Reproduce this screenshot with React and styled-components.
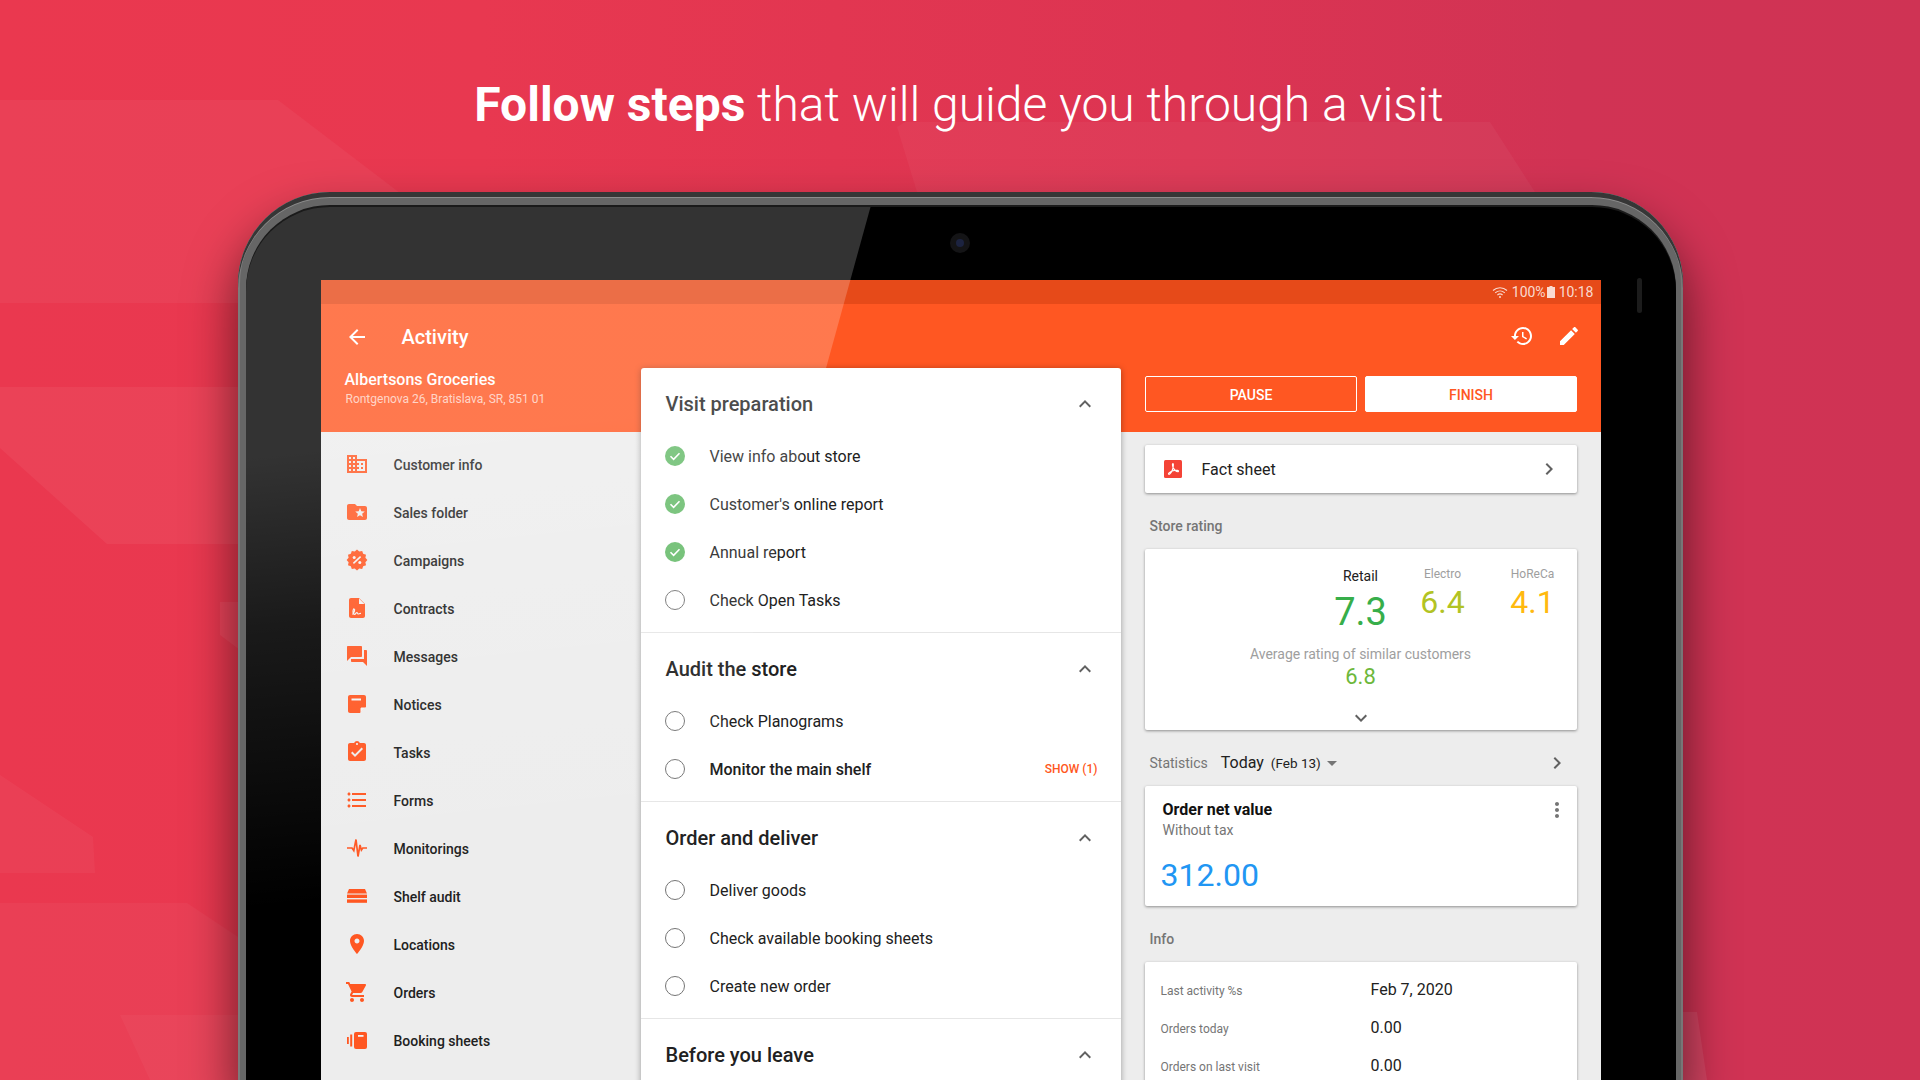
import React from "react";
import styled, { createGlobalStyle } from "styled-components";

const GlobalStyle = createGlobalStyle`
  html, body {
    margin: 0;
    padding: 0;
    width: 1920px;
    height: 1080px;
    overflow: hidden;
  }
  body {
    font-family: Roboto, "Noto Sans", sans-serif;
    color: #212121;
  }
  * {
    box-sizing: border-box;
  }
`;

const ORANGE = "#FF5722";

const paths = {
  back: "M20 11H7.83l5.59-5.59L12 4l-8 8 8 8 1.41-1.41L7.83 13H20v-2z",
  history: "M13 3c-4.97 0-9 4.03-9 9H1l3.89 3.89.07.14L9 12H6c0-3.87 3.13-7 7-7s7 3.13 7 7-3.13 7-7 7c-1.93 0-3.68-.79-4.94-2.06l-1.42 1.42C8.27 19.99 10.51 21 13 21c4.97 0 9-4.03 9-9s-4.03-9-9-9zm-1 5v5l4.28 2.54.72-1.21-3.5-2.08V8H12z",
  edit: "M3 17.25V21h3.75L17.81 9.94l-3.75-3.75L3 17.25zM20.71 7.04c.39-.39.39-1.02 0-1.41l-2.34-2.34c-.39-.39-1.02-.39-1.41 0l-1.83 1.83 3.75 3.75 1.83-1.83z",
  less: "M12 8l-6 6 1.41 1.41L12 10.83l4.59 4.58L18 14z",
  more: "M16.59 8.59L12 13.17 7.41 8.59 6 10l6 6 6-6z",
  right: "M10 6L8.59 7.41 13.17 12l-4.58 4.59L10 18l6-6z",
  drop: "M7 10l5 5 5-5z",
  kebab: "M12 8c1.1 0 2-.9 2-2s-.9-2-2-2-2 .9-2 2 .9 2 2 2zm0 2c-1.1 0-2 .9-2 2s.9 2 2 2 2-.9 2-2-.9-2-2-2zm0 6c-1.1 0-2 .9-2 2s.9 2 2 2 2-.9 2-2-.9-2-2-2z",
  domain: "M12 7V3H2v18h20V7H12zM6 19H4v-2h2v2zm0-4H4v-2h2v2zm0-4H4V9h2v2zm0-4H4V5h2v2zm4 12H8v-2h2v2zm0-4H8v-2h2v2zm0-4H8V9h2v2zm0-4H8V5h2v2zm10 12h-8v-2h2v-2h-2v-2h2v-2h-2V9h8v10zm-2-8h-2v2h2v-2zm0 4h-2v2h2v-2z",
  folder: "M20 6h-8l-2-2H4c-1.1 0-1.99.9-1.99 2L2 18c0 1.1.9 2 2 2h16c1.1 0 2-.9 2-2V8c0-1.1-.9-2-2-2zm-2.06 11L15 15.28 12.06 17l.78-3.33-2.59-2.24 3.41-.29L15 8l1.34 3.14 3.41.29-2.59 2.24.78 3.33z",
  chat: "M21 6h-2v9H6v2c0 .55.45 1 1 1h11l4 4V7c0-.55-.45-1-1-1zm-4 6V3c0-.55-.45-1-1-1H3c-.55 0-1 .45-1 1v14l4-4h10c.55 0 1-.45 1-1z",
  tasks: "M19 3h-4.18C14.4 1.84 13.3 1 12 1c-1.3 0-2.4.84-2.82 2H5c-1.1 0-2 .9-2 2v14c0 1.1.9 2 2 2h14c1.1 0 2-.9 2-2V5c0-1.1-.9-2-2-2zm-7 0c.55 0 1 .45 1 1s-.45 1-1 1-1-.45-1-1 .45-1 1-1zm-2 14l-4-4 1.41-1.41L10 14.17l6.59-6.59L18 9l-8 8z",
  list: "M4 10.5c-.83 0-1.5.67-1.5 1.5s.67 1.5 1.5 1.5 1.5-.67 1.5-1.5-.67-1.5-1.5-1.5zm0-6c-.83 0-1.5.67-1.5 1.5S3.17 7.5 4 7.5 5.5 6.83 5.5 6 4.83 4.5 4 4.5zm0 12c-.83 0-1.5.68-1.5 1.5s.68 1.5 1.5 1.5 1.5-.68 1.5-1.5-.67-1.5-1.5-1.5zM7 19h14v-2H7v2zm0-6h14v-2H7v2zm0-8v2h14V5H7z",
  place: "M12 2C8.13 2 5 5.13 5 9c0 5.25 7 13 7 13s7-7.75 7-13c0-3.87-3.13-7-7-7zm0 9.5c-1.38 0-2.5-1.12-2.5-2.5s1.12-2.5 2.5-2.5 2.5 1.12 2.5 2.5-1.12 2.5-2.5 2.5z",
  cart: "M7 18c-1.1 0-1.99.9-1.99 2S5.9 22 7 22s2-.9 2-2-.9-2-2-2zM1 2v2h2l3.6 7.59-1.35 2.45c-.16.28-.25.61-.25.96 0 1.1.9 2 2 2h12v-2H7.42c-.14 0-.25-.11-.25-.25l.03-.12.9-1.63h7.45c.75 0 1.41-.41 1.75-1.03l3.58-6.49c.08-.14.12-.31.12-.48 0-.55-.45-1-1-1H5.21l-.94-2H1zm16 16c-1.1 0-1.99.9-1.99 2s.89 2 1.99 2 2-.9 2-2-.9-2-2-2z",
};

// scalloped edge of the campaign badge
const badgePoints = () => {
  const pts = [];
  for (let i = 0; i < 24; i++) {
    const r = i % 2 ? 8.7 : 10.4;
    const a = (Math.PI * i) / 12;
    pts.push((12 + r * Math.cos(a)).toFixed(2) + "," + (12 + r * Math.sin(a)).toFixed(2));
  }
  return pts.join(" ");
};

const Svg = styled.svg`
  display: block;
  flex: none;
  width: ${(p) => p.$size || 24}px;
  height: ${(p) => p.$height || p.$size || 24}px;
  fill: ${(p) => p.$color || "currentColor"};
`;

const Icon = ({ name, size, color }) => (
  <Svg viewBox="0 0 24 24" $size={size} $color={color}>
    <path d={paths[name]} />
  </Svg>
);

const CustomIcon = ({ children, color = ORANGE }) => (
  <Svg viewBox="0 0 24 24" $color={color}>
    {children}
  </Svg>
);

const navItems = [
  { label: "Customer info", icon: <Icon name="domain" color={ORANGE} /> },
  { label: "Sales folder", icon: <Icon name="folder" color={ORANGE} /> },
  {
    label: "Campaigns",
    icon: (
      <CustomIcon>
        <polygon points={badgePoints()} />
        <path d="M15.6 8.6l-7.2 6.8" stroke="#f3f3f3" strokeWidth="1.5" fill="none" />
        <circle cx="9.2" cy="9.4" r="1.5" fill="#f3f3f3" />
        <circle cx="14.8" cy="14.6" r="1.5" fill="#f3f3f3" />
      </CustomIcon>
    ),
  },
  {
    label: "Contracts",
    icon: (
      <CustomIcon>
        <path d="M14 2H6c-1.1 0-2 .9-2 2v16c0 1.1.9 2 2 2h12c1.1 0 2-.9 2-2V8l-6-6z" />
        <path d="M14 2.5V8h5.5z" fill="#f3f3f3" />
        <path d="M7.5 18.5c1.5-1.5 3-5 1.6-5.5-1.3-.4-1.7 5.5.4 5.3 1.2-.1 1.5-2 2.5-1.8.8.2.2 1.5 1.2 1.5.8 0 1.3-.8 2.8-.7" stroke="#f3f3f3" strokeWidth="1.2" fill="none" />
      </CustomIcon>
    ),
  },
  { label: "Messages", icon: <Icon name="chat" color={ORANGE} /> },
  {
    label: "Notices",
    icon: (
      <CustomIcon>
        <path d="M19 3H5c-1.1 0-2 .9-2 2v14c0 1.1.9 2 2 2h10l6-6V5c0-1.1-.9-2-2-2z" />
        <rect x="6.5" y="6.5" width="9.5" height="2" fill="#f3f3f3" />
        <path d="M15.5 21v-4.2c0-.7.5-1.3 1.2-1.3H21z" fill="#f3f3f3" />
      </CustomIcon>
    ),
  },
  { label: "Tasks", icon: <Icon name="tasks" color={ORANGE} /> },
  { label: "Forms", icon: <Icon name="list" color={ORANGE} /> },
  {
    label: "Monitorings",
    icon: (
      <CustomIcon>
        <polyline
          points="2,12 7,12 8.8,14.6 11,3.5 13,20.5 15,9 16.4,14 17.8,12 22,12"
          fill="none"
          stroke={ORANGE}
          strokeWidth="1.7"
        />
      </CustomIcon>
    ),
  },
  {
    label: "Shelf audit",
    icon: (
      <CustomIcon>
        <path d="M4 5h16l2 4.4H2z" />
        <rect x="2" y="10.6" width="20" height="3.4" />
        <rect x="2" y="15.4" width="20" height="3.4" />
      </CustomIcon>
    ),
  },
  { label: "Locations", icon: <Icon name="place" color={ORANGE} /> },
  { label: "Orders", icon: <Icon name="cart" color={ORANGE} /> },
  {
    label: "Booking sheets",
    icon: (
      <CustomIcon>
        <rect x="2" y="9" width="1.8" height="7" />
        <rect x="5.2" y="6.5" width="2" height="12" />
        <rect x="9" y="4" width="13" height="17" rx="2" />
        <rect x="13" y="7" width="5.5" height="1.8" fill="#f3f3f3" />
      </CustomIcon>
    ),
  },
];

const sections = [
  {
    title: "Visit preparation",
    items: [
      { label: "View info about store", done: true },
      { label: "Customer's online report", done: true },
      { label: "Annual report", done: true },
      { label: "Check Open Tasks" },
    ],
  },
  {
    title: "Audit the store",
    items: [
      { label: "Check Planograms" },
      { label: "Monitor the main shelf", strong: true, action: "SHOW (1)" },
    ],
  },
  {
    title: "Order and deliver",
    items: [
      { label: "Deliver goods" },
      { label: "Check available booking sheets" },
      { label: "Create new order" },
    ],
  },
  { title: "Before you leave", items: [] },
];

const infoRows = [
  { label: "Last activity %s", value: "Feb 7, 2020" },
  { label: "Orders today", value: "0.00" },
  { label: "Orders on last visit", value: "0.00" },
];

const Page = styled.div`
  position: relative;
  width: 1920px;
  height: 1080px;
  overflow: hidden;
  display: flex;
  flex-direction: column;
  align-items: center;
  background: linear-gradient(90deg, #ea384f 0%, #e83850 25%, #dc3452 62%, #d13354 82%, #cf3354 100%);
`;

const Backdrop = styled.svg`
  position: absolute;
  left: 0;
  top: 0;
  width: 1920px;
  height: 1080px;
  fill: #fff;
`;

const Headline = styled.h1`
  position: relative;
  height: 192px;
  margin: 0 2px 0 0;
  padding-top: 77px;
  flex: none;
  font-size: 48px;
  line-height: 56px;
  font-weight: 300;
  color: #fff;
  white-space: nowrap;
  b {
    font-weight: 700;
  }
`;

const Tablet = styled.div`
  position: relative;
  flex: 1;
  min-height: 0;
  width: 1445px;
  display: flex;
  flex-direction: column;
  padding: 15px 7px 0 8px;
  border-radius: 92px 92px 0 0;
  background: #666;
  box-shadow: inset 0 5px 0 #363636, inset 0 6px 0 #8c8c8c, inset 2px 0 0 #7c7c7c,
    inset -2px 0 0 #777, 0 28px 48px 4px rgba(0, 0, 0, 0.5);
`;

const Glass = styled.div`
  position: relative;
  flex: 1;
  min-height: 0;
  display: flex;
  flex-direction: column;
  padding: 73px 75px 0;
  border-radius: 84px 84px 0 0;
  background: #000;
  overflow: hidden;
  box-shadow: 0 -2px 0 #1a1a1a;
`;

const Reflection = styled.div`
  position: absolute;
  z-index: 3;
  left: 0;
  top: 0;
  width: 640px;
  height: 873px;
  pointer-events: none;
  clip-path: polygon(0 0, 625px 0, 384px 873px, 0 873px);
  background: linear-gradient(174deg, rgba(255, 255, 255, 0.2) 0, rgba(255, 255, 255, 0.2) 250px, rgba(255, 255, 255, 0.1) 420px, rgba(255, 255, 255, 0) 700px);
`;

const Camera = styled.div`
  position: absolute;
  left: 704px;
  top: 26px;
  width: 20px;
  height: 20px;
  border-radius: 50%;
  background: #141416;
  &::after {
    content: "";
    position: absolute;
    left: 6px;
    top: 6px;
    width: 8px;
    height: 8px;
    border-radius: 50%;
    background: #1c2340;
  }
`;

const Sensor = styled.div`
  position: absolute;
  left: 1391px;
  top: 71px;
  width: 5px;
  height: 35px;
  border-radius: 3px;
  background: #1c1c1c;
`;

const Screen = styled.div`
  flex: 1;
  min-height: 0;
  overflow: hidden;
  background: #ededed;
`;

const StatusBar = styled.div`
  height: 24px;
  display: flex;
  align-items: center;
  justify-content: flex-end;
  gap: 4px;
  padding-right: 7px;
  background: #e64a19;
  color: rgba(255, 255, 255, 0.8);
  font-size: 14px;
  svg {
    fill: none;
  }
`;

const BatteryIcon = styled(Svg)`
  margin-left: -3px;
`;

const AppBar = styled.div`
  height: 128px;
  display: grid;
  grid-template-columns: 320px 480px 480px;
  background: ${ORANGE};
  color: #fff;
`;

const TitleRow = styled.div`
  height: 64px;
  display: flex;
  align-items: center;
  gap: 33px;
  padding: 1px 0 0 24px;
  font-size: 20px;
  font-weight: 500;
`;

const StoreInfo = styled.div`
  padding-left: 24px;
`;

const StoreName = styled.div`
  font-size: 16px;
  line-height: 20px;
  font-weight: 500;
  margin-top: 2px;
`;

const StoreAddress = styled.div`
  font-size: 12px;
  line-height: 16px;
  margin: 1px 0 0 1px;
  color: rgba(255, 255, 255, 0.7);
`;

const ActionIcons = styled.div`
  height: 64px;
  display: flex;
  align-items: center;
  justify-content: flex-end;
  gap: 23px;
  padding-right: 20px;
`;

const ButtonRow = styled.div`
  display: grid;
  grid-template-columns: 1fr 1fr;
  gap: 8px;
  margin-top: 8px;
  padding: 0 24px;
`;

const Button = styled.div`
  height: 36px;
  display: flex;
  align-items: center;
  justify-content: center;
  padding: 1px 0 0 1px;
  border-radius: 2px;
  border: 1px solid #fff;
  font-size: 14px;
  font-weight: 500;
  background: ${(p) => (p.$filled ? "#fff" : "transparent")};
  color: ${(p) => (p.$filled ? ORANGE : "#fff")};
`;

const Body = styled.div`
  display: grid;
  grid-template-columns: 320px 480px 480px;
`;

const Nav = styled.div`
  padding-top: 8px;
`;

const NavRow = styled.div`
  height: 48px;
  display: flex;
  align-items: center;
  gap: 25px;
  padding: 1px 0 0 24px;
  font-size: 14px;
  font-weight: 500;
  svg {
    margin-top: -1px;
  }
`;

const StepsCard = styled.div`
  position: relative;
  z-index: 1;
  margin-top: -64px;
  height: 760px;
  background: #fff;
  border-radius: 3px 3px 0 0;
  box-shadow: 0 1px 6px rgba(0, 0, 0, 0.35);
`;

const Section = styled.div`
  padding-bottom: 8px;
  border-bottom: ${(p) => (p.$last ? "none" : "1px solid #e6e6e6")};
`;

const SectionHead = styled.div`
  height: 64px;
  padding: 7px 24px 0 25px;
  display: flex;
  align-items: center;
  justify-content: space-between;
  font-size: 20px;
  font-weight: 500;
  svg {
    margin-top: 1px;
    fill: #616161;
  }
`;

const StepRow = styled.div`
  height: 48px;
  display: flex;
  align-items: center;
  gap: 25px;
  padding: 0 24px;
  font-size: 16px;
  font-weight: ${(p) => (p.$strong ? 500 : 400)};
`;

const Radio = styled.span`
  flex: none;
  width: 20px;
  height: 20px;
  border-radius: 50%;
  border: 1.5px solid #757575;
`;

const StepAction = styled.span`
  margin: 0 -1px 0 auto;
  font-size: 12px;
  font-weight: 500;
  color: ${ORANGE};
`;

const Side = styled.div`
  padding: 13px 24px 0;
`;

const Card = styled.div`
  background: #fff;
  border-radius: 2px;
  box-shadow: 0 1px 3px rgba(0, 0, 0, 0.4);
`;

const FactSheet = styled(Card)`
  height: 48px;
  display: flex;
  align-items: center;
  gap: 20px;
  padding: 0 16px 0 19px;
  font-size: 16px;
  span {
    flex: 1;
  }
  svg:last-child {
    fill: #616161;
  }
`;

const SectionLabel = styled.div`
  height: 56px;
  display: flex;
  align-items: center;
  gap: 13px;
  padding: 9px 8px 0 5px;
  font-size: 14px;
  font-weight: ${(p) => (p.$plain ? 400 : 500)};
  color: #757575;
`;

const RatingCard = styled(Card)`
  padding-top: 16px;
  height: 181px;
  text-align: center;
`;

const ScoreRow = styled.div`
  display: flex;
  padding-left: 156px;
`;

const Score = styled.div`
  flex: none;
  width: ${(p) => p.$width}px;
  margin-left: ${(p) => p.$gap || 0}px;
  white-space: nowrap;
  display: flex;
  flex-direction: column;
  align-items: center;
`;

const ScoreLabel = styled.div`
  font-size: ${(p) => (p.$main ? 14 : 12)}px;
  line-height: ${(p) => (p.$main ? 20 : 16)}px;
  margin-top: 1px;
  color: ${(p) => (p.$main ? "#212121" : "#9e9e9e")};
`;

const ScoreValue = styled.div`
  font-size: ${(p) => (p.$main ? 38 : 32)}px;
  line-height: ${(p) => (p.$main ? 48 : 40)}px;
  margin-top: ${(p) => (p.$main ? 2 : 0)}px;
  color: ${(p) => p.$color};
`;

const AverageBlock = styled.div`
  padding-top: 8px;
  display: flex;
  flex-direction: column;
  align-items: center;
`;

const AverageLabel = styled.div`
  font-size: 14px;
  line-height: 20px;
  color: #9e9e9e;
`;

const AverageValue = styled.div`
  font-size: 22px;
  line-height: 26px;
  color: #6db83b;
`;

const Expand = styled.div`
  display: flex;
  justify-content: center;
  margin-top: 16px;
  svg {
    fill: #616161;
  }
`;

const PeriodLabel = styled.span`
  font-size: 16px;
  color: #212121;
  small {
    margin-left: 7px;
    font-size: 13.5px;
  }
`;

const PeriodDrop = styled.span`
  margin-left: -14px;
  margin-right: auto;
  svg {
    fill: #757575;
  }
`;

const NextLink = styled.span`
  svg {
    fill: #616161;
  }
`;

const ValueCard = styled(Card)`
  height: 120px;
  display: flex;
  justify-content: space-between;
  padding: 14px 8px 0 18px;
  svg {
    margin-top: -2px;
    fill: #757575;
  }
`;

const ValueTitle = styled.div`
  font-size: 16px;
  line-height: 20px;
  font-weight: 700;
  color: #111;
`;

const ValueSub = styled.div`
  font-size: 14px;
  line-height: 20px;
  color: #757575;
`;

const ValueNumber = styled.div`
  margin: 15px 0 0 -2px;
  font-size: 32px;
  line-height: 40px;
  color: #2196f3;
`;

const InfoCard = styled(Card)`
  height: 130px;
  padding: 8px 16px 0;
`;

const InfoRow = styled.div`
  height: 38px;
  display: grid;
  grid-template-columns: 210px 1fr;
  align-items: center;
  font-size: 16px;
  color: #212121;
  span:first-child {
    margin-top: 3px;
    font-size: 12px;
    color: #757575;
  }
`;

const App = () => {
  return (
    <Page>
      <GlobalStyle />
      <Backdrop viewBox="0 0 1920 1080">
        <polygon points="0,100 278,100 400,193 400,303 0,303" opacity="0.045" />
        <polygon points="0,387 240,387 240,544 107,544 0,448" opacity="0.05" />
        <polygon points="0,775 93,837 95,873 0,873" opacity="0.04" />
        <polygon points="0,903 187,903 238,937 238,1080 0,1080" opacity="0.035" />
        <polygon points="120,1015 240,1015 240,1080 150,1080" opacity="0.03" />
        <polygon points="897,127 905,122 1490,122 1535,192 917,192" opacity="0.04" />
        <polygon points="220,602 240,602 240,650 220,635" opacity="0.06" />
        <polygon points="1683,1012 1697,1012 1707,1080 1683,1080" opacity="0.08" />
      </Backdrop>

      <Headline>
        <b>Follow steps</b> that will guide you through a visit
      </Headline>

      <Tablet>
        <Glass>
          <Camera />
          <Sensor />
          <Reflection />
          <Screen>
            <StatusBar>
              <Svg viewBox="0 0 16 14" $size={16}>
                <path d="M1 5.5c4-3.6 10-3.6 14 0M3.2 7.8c2.8-2.4 6.8-2.4 9.6 0M5.4 10c1.5-1.3 3.700-1.3 5.2 0" stroke="currentColor" strokeWidth="1.1" />
                <circle cx="8" cy="12" r="1" fill="currentColor" />
              </Svg>
              <span>100%</span>
              <BatteryIcon viewBox="0 0 8 12" $size={8} $height={12}>
                <path d="M2.5 0h3v1H8v11H0V1h2.500z" fill="currentColor" />
              </BatteryIcon>
              <span>10:18</span>
            </StatusBar>

            <AppBar>
              <div>
                <TitleRow>
                  <Icon name="back" />
                  Activity
                </TitleRow>
                <StoreInfo>
                  <StoreName>Albertsons Groceries</StoreName>
                  <StoreAddress>Rontgenova 26, Bratislava, SR, 851 01</StoreAddress>
                </StoreInfo>
              </div>
              <div />
              <div>
                <ActionIcons>
                  <Icon name="history" />
                  <Icon name="edit" />
                </ActionIcons>
                <ButtonRow>
                  <Button>PAUSE</Button>
                  <Button $filled>FINISH</Button>
                </ButtonRow>
              </div>
            </AppBar>

            <Body>
              <Nav>
                {navItems.map((item) => (
                  <NavRow key={item.label}>
                    {item.icon}
                    {item.label}
                  </NavRow>
                ))}
              </Nav>

              <StepsCard>
                {sections.map((section, i) => (
                  <Section key={section.title} $last={i === sections.length - 1}>
                    <SectionHead>
                      {section.title}
                      <Icon name="less" />
                    </SectionHead>
                    {section.items.map((item) => (
                      <StepRow key={item.label} $strong={item.strong}>
                        {item.done ? (
                          <Svg viewBox="0 0 20 20" $size={20}>
                            <circle cx="10" cy="10" r="10" fill="#66bb6a" />
                            <polyline points="5.5,10.3 8.6,13.3 14.5,7.3" fill="none" stroke="#fff" strokeWidth="1.6" />
                          </Svg>
                        ) : (
                          <Radio />
                        )}
                        {item.label}
                        {item.action && <StepAction>{item.action}</StepAction>}
                      </StepRow>
                    ))}
                  </Section>
                ))}
              </StepsCard>

              <Side>
                <FactSheet>
                  <Svg viewBox="0 0 18 18" $size={18}>
                    <rect width="18" height="18" rx="1.5" fill="#f44336" />
                    <path d="M9 3.5c-.8 0-.8 2 .2 4.2 1 2 2.4 3.8 4.6 4 1 .1 1-1.1-.2-1.3-2.800-.3-6.600.6-8.800 2.800-.8.8 0 1.600.9.9 1.600-1.300 2.900-4.300 3.500-7.300.2-1.500.4-3.300-.2-3.300z" fill="none" stroke="#fff" strokeWidth="1.1" />
                  </Svg>
                  <span>Fact sheet</span>
                  <Icon name="right" />
                </FactSheet>

                <SectionLabel>Store rating</SectionLabel>

                <RatingCard>
                  <ScoreRow>
                    <Score $width={120}>
                      <ScoreLabel $main>Retail</ScoreLabel>
                      <ScoreValue $main $color="#37ae4a">7.3</ScoreValue>
                    </Score>
                    <Score $width={44}>
                      <ScoreLabel>Electro</ScoreLabel>
                      <ScoreValue $color="#b2c323">6.4</ScoreValue>
                    </Score>
                    <Score $width={44} $gap={46}>
                      <ScoreLabel>HoReCa</ScoreLabel>
                      <ScoreValue $color="#ffb90f">4.1</ScoreValue>
                    </Score>
                  </ScoreRow>
                  <AverageBlock>
                    <AverageLabel>Average rating of similar customers</AverageLabel>
                    <AverageValue>6.8</AverageValue>
                  </AverageBlock>
                  <Expand>
                    <Icon name="more" />
                  </Expand>
                </RatingCard>

                <SectionLabel $plain>
                  Statistics
                  <PeriodLabel>
                    Today<small>(Feb 13)</small>
                  </PeriodLabel>
                  <PeriodDrop>
                    <Icon name="drop" />
                  </PeriodDrop>
                  <NextLink>
                    <Icon name="right" />
                  </NextLink>
                </SectionLabel>

                <ValueCard>
                  <div>
                    <ValueTitle>Order net value</ValueTitle>
                    <ValueSub>Without tax</ValueSub>
                    <ValueNumber>312.00</ValueNumber>
                  </div>
                  <Icon name="kebab" />
                </ValueCard>

                <SectionLabel>Info</SectionLabel>

                <InfoCard>
                  {infoRows.map((row) => (
                    <InfoRow key={row.label}>
                      <span>{row.label}</span>
                      <span>{row.value}</span>
                    </InfoRow>
                  ))}
                </InfoCard>
              </Side>
            </Body>
          </Screen>
        </Glass>
      </Tablet>
    </Page>
  );
};

export default App;
